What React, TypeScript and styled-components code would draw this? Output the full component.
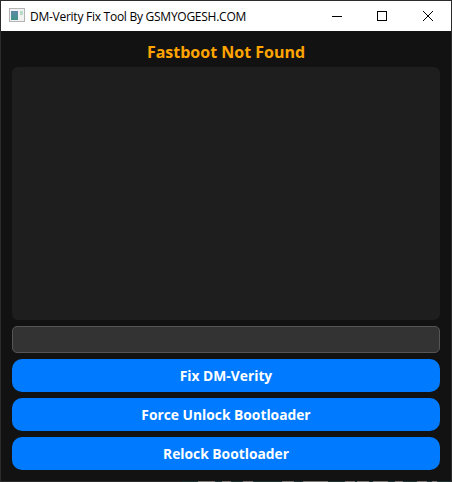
import styled, { createGlobalStyle } from 'styled-components'

const GlobalStyle = createGlobalStyle`
  html, body {
    margin: 0;
    padding: 0;
    background: #121212;
  }
`

const Window = styled.div`
  width: 452px;
  height: 482px;
  box-sizing: border-box;
  display: flex;
  flex-direction: column;
  background: #121212;
  border: 1px solid #2b2b2b;
  border-bottom: none;
  overflow: hidden;
`

const TitleBar = styled.div`
  height: 30px;
  flex: none;
  display: flex;
  align-items: center;
  background: #fff;
`

const AppIcon = styled.svg`
  width: 16px;
  height: 16px;
  margin: 0 5px 0 8px;
  flex: none;
`

const Title = styled.div`
  flex: 1;
  font: 12px "Open Sans", "Noto Sans", sans-serif;
  letter-spacing: -0.26px;
  color: #000;
  white-space: nowrap;
`

const Controls = styled.div`
  display: flex;
  margin-right: 1px;
`

const WinButton = styled.div<{ $wide?: boolean }>`
  width: ${({ $wide }) => ($wide ? '46px' : '45px')};
  height: 30px;
  box-sizing: border-box;
  padding-left: ${({ $wide }) => ($wide ? '19px' : '18px')};
  display: flex;
  align-items: center;
`

const Content = styled.div`
  flex: 1;
  display: flex;
  flex-direction: column;
  padding: 0 11px;
`

const Status = styled.div`
  height: 36px;
  padding-top: 5px;
  box-sizing: border-box;
  display: flex;
  align-items: center;
  justify-content: center;
  font: bold 16px "Open Sans", "Noto Sans", sans-serif;
  color: #ffa500;
`

const LogArea = styled.div`
  height: 253px;
  background: #1e1e1e;
  border-radius: 6px;
`

const InputField = styled.div`
  height: 27px;
  margin-top: 6px;
  box-sizing: border-box;
  background: #333;
  border: 1px solid #555;
  border-radius: 5px;
`

const ActionButton = styled.div`
  height: 33px;
  margin-top: 6px;
  display: flex;
  align-items: center;
  justify-content: center;
  background: #007bff;
  border-radius: 10px;
  color: #fff;
  font: bold 13.8px "Open Sans", "Noto Sans", sans-serif;
`

// the desktop behind the window peeks through on the last pixel row
const DesktopPeek = styled.div`
  height: 1px;
  flex: none;
  margin: 0 -1px;
  background: linear-gradient(
    to right,
    #2b2b2b 183px,
    #1f3533 183px 198px,
    #7d7877 198px 215px,
    #1f3533 215px 222px,
    #7d7877 222px 231px,
    #1f3533 231px 243px,
    #7d7877 243px 253px,
    #1f3533 253px 282px,
    #7d7877 282px 294px,
    #1f3533 294px 303px,
    #7d7877 303px 328px,
    #1f3533 328px 345px,
    #7d7877 345px 355px,
    #1f3533 355px 357px,
    #7d7877 357px 369px,
    #1f3533 369px 373px,
    #7d7877 373px 388px,
    #1f3533 388px 395px,
    #7d7877 395px 403px,
    #1f3533 403px 417px,
    #7d7877 417px 427px,
    #1f3533 427px 432px,
    #7d7877 432px 437px,
    #1f3533 437px
  );
`

const App = () => (
  <>
    <GlobalStyle />
    <Window>
      <TitleBar>
        <AppIcon viewBox="0 0 16 16">
          <defs>
            <linearGradient id="pane" x1="0" y1="0" x2="0" y2="1">
              <stop offset="0" stopColor="#5f86a8" />
              <stop offset="1" stopColor="#3f9488" />
            </linearGradient>
          </defs>
          <rect x="0.5" y="0.5" width="15" height="13" fill="#f2f2f2" stroke="#b4b4b4" />
          <rect x="2" y="3" width="7" height="9" fill="url(#pane)" />
          <rect x="11" y="3" width="3" height="4" fill="#b9dcc8" />
        </AppIcon>
        <Title>DM-Verity Fix Tool By GSMYOGESH.COM</Title>
        <Controls>
          <WinButton>
            <svg width="10" height="10" viewBox="0 0 10 10">
              <path d="M0 5.5H10" stroke="#000" />
            </svg>
          </WinButton>
          <WinButton>
            <svg width="10" height="10" viewBox="0 0 10 10">
              <rect x="0.5" y="0.5" width="9" height="9" fill="none" stroke="#000" />
            </svg>
          </WinButton>
          <WinButton $wide>
            <svg width="10" height="10" viewBox="0 0 10 10">
              <path d="M0 0L10 10M10 0L0 10" stroke="#000" />
            </svg>
          </WinButton>
        </Controls>
      </TitleBar>
      <Content>
        <Status>Fastboot Not Found</Status>
        <LogArea />
        <InputField />
        <ActionButton>Fix DM-Verity</ActionButton>
        <ActionButton>Force Unlock Bootloader</ActionButton>
        <ActionButton>Relock Bootloader</ActionButton>
      </Content>
      <DesktopPeek />
    </Window>
  </>
)

export default App
